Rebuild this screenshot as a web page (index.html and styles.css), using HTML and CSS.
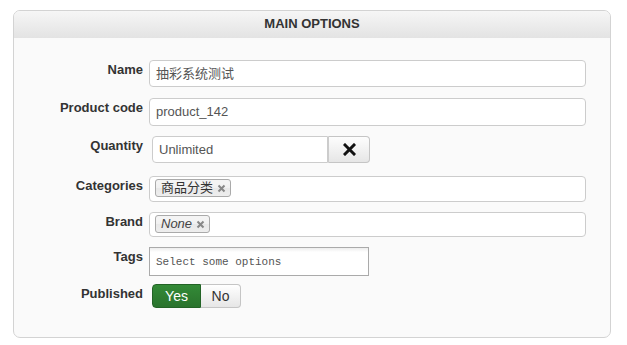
FILE: index.html
```html
<!DOCTYPE html>
<html lang="en">
<head>
    <meta charset="UTF-8">
    <title>Main Options</title>
    <link rel="stylesheet" href="styles.css">
</head>
<body>

    <div class="panel">
        <div class="panel-header">MAIN OPTIONS</div>

        <div class="panel-body">
            <!-- Name -->
            <div class="row row-name">
                <label>Name</label>
                <div class="field field-text">抽彩系统测试</div>
            </div>

            <!-- Product code -->
            <div class="row row-code">
                <label>Product code</label>
                <div class="field field-text">product_142</div>
            </div>

            <!-- Quantity -->
            <div class="row row-qty">
                <label>Quantity</label>
                <div class="qty">
                    <div class="field qty-input">Unlimited</div>
                    <button class="qty-clear" type="button">
                        <svg width="13" height="13" viewBox="0 0 13 13">
                            <path d="M2 2 L11 11 M11 2 L2 11" stroke="#111" stroke-width="3" stroke-linecap="square"/>
                        </svg>
                    </button>
                </div>
            </div>

            <!-- Categories -->
            <div class="row row-cat">
                <label>Categories</label>
                <div class="field chosen">
                    <span class="chip">商品分类
                        <svg class="chip-x" width="9" height="9" viewBox="0 0 9 9">
                            <path d="M1.5 1.5 L7.5 7.5 M7.5 1.5 L1.5 7.5" stroke="#888" stroke-width="2"/>
                        </svg>
                    </span>
                </div>
            </div>

            <!-- Brand -->
            <div class="row row-brand">
                <label>Brand</label>
                <div class="field chosen">
                    <span class="chip"><em>None</em>
                        <svg class="chip-x" width="9" height="9" viewBox="0 0 9 9">
                            <path d="M1.5 1.5 L7.5 7.5 M7.5 1.5 L1.5 7.5" stroke="#888" stroke-width="2"/>
                        </svg>
                    </span>
                </div>
            </div>

            <!-- Tags -->
            <div class="row row-tags">
                <label>Tags</label>
                <div class="tags">Select some options</div>
            </div>

            <!-- Published -->
            <div class="row row-pub">
                <label>Published</label>
                <div class="toggle">
                    <span class="toggle-yes">Yes</span>
                    <span class="toggle-no">No</span>
                </div>
            </div>
        </div>
    </div>

</body>
</html>
```

FILE: styles.css
```css
* {
    margin: 0;
    padding: 0;
    box-sizing: border-box;
}

body {
    font-family: 'Liberation Sans', Arial, 'Noto Sans CJK SC', sans-serif;
    font-size: 13px;
    color: #333;
    background-color: #fff;
}

.panel {
    margin: 10px 16px 0 13px;
    height: 328px;
    background-color: #fafafa;
    border: 1px solid #d3d3d3;
    border-radius: 7px;
    overflow: hidden;
}

.panel-header {
    height: 27px;
    line-height: 26px;
    text-align: center;
    font-weight: bold;
    font-size: 13px;
    color: #333;
    background: linear-gradient(#f6f6f6, #e3e3e3);
}

.panel-body {
    padding: 22px 24px 0 0;
}

.row {
    display: flex;
    align-items: flex-start;
    margin-bottom: 10px;
}

label {
    width: 129px;
    flex-shrink: 0;
    margin-right: 6px;
    padding-top: 2px;
    line-height: 15px;
    text-align: right;
    font-weight: bold;
    color: #333;
}

.field {
    background-color: #fff;
    border: 1px solid #ccc;
    border-radius: 4px;
    color: #555;
}

.field-text {
    flex: 1;
    height: 27px;
    line-height: 25px;
    padding: 0 6px;
}

.row-name {
    margin-bottom: 11px;
}

.row-code .field-text {
    height: 28px;
    line-height: 26px;
}

.qty {
    display: flex;
    margin-left: 3px;
}

.qty-input {
    width: 176px;
    height: 27px;
    line-height: 25px;
    padding: 0 6px;
    border-radius: 4px 0 0 4px;
}

.qty-clear {
    width: 42px;
    height: 27px;
    border: 1px solid #c5c5c5;
    border-left-color: #ccc;
    border-radius: 0 4px 4px 0;
    background: linear-gradient(#fdfdfd, #e6e6e6);
    display: flex;
    align-items: center;
    justify-content: center;
}

.row-qty {
    margin-bottom: 13px;
}

.chosen {
    flex: 1;
    height: 26px;
    padding: 2px 5px;
}

.row-brand .chosen {
    height: 25px;
}

.chip {
    display: inline-flex;
    align-items: center;
    gap: 4px;
    height: 18px;
    line-height: 16px;
    padding: 0 4px 0 5px;
    border: 1px solid #aaa;
    border-radius: 3px;
    background: linear-gradient(#f4f4f4 20%, #f0f0f0 50%, #e8e8e8 52%, #eee);
    color: #333;
}

.chip em {
    color: #444;
}

.chip-x {
    margin-top: 1px;
}

.tags {
    width: 220px;
    height: 29px;
    line-height: 28px;
    padding: 0 6px;
    border: 1px solid #aaa;
    background: linear-gradient(#eee 1%, #fff 15%);
    font-family: 'Liberation Mono', 'Courier New', monospace;
    font-size: 11px;
    color: #555;
}

.row-tags {
    margin-bottom: 8px;
}

.toggle {
    display: flex;
    margin-left: 3px;
    height: 24px;
    line-height: 22px;
    font-size: 14px;
}

.toggle-yes {
    width: 49px;
    text-align: center;
    color: #fff;
    background: linear-gradient(#338a37, #2a732d);
    border: 1px solid #236326;
    border-radius: 4px 0 0 4px;
}

.toggle-no {
    width: 40px;
    text-align: center;
    color: #333;
    background: linear-gradient(#fff, #e6e6e6);
    border: 1px solid #c5c5c5;
    border-left: none;
    border-radius: 0 4px 4px 0;
}
```
